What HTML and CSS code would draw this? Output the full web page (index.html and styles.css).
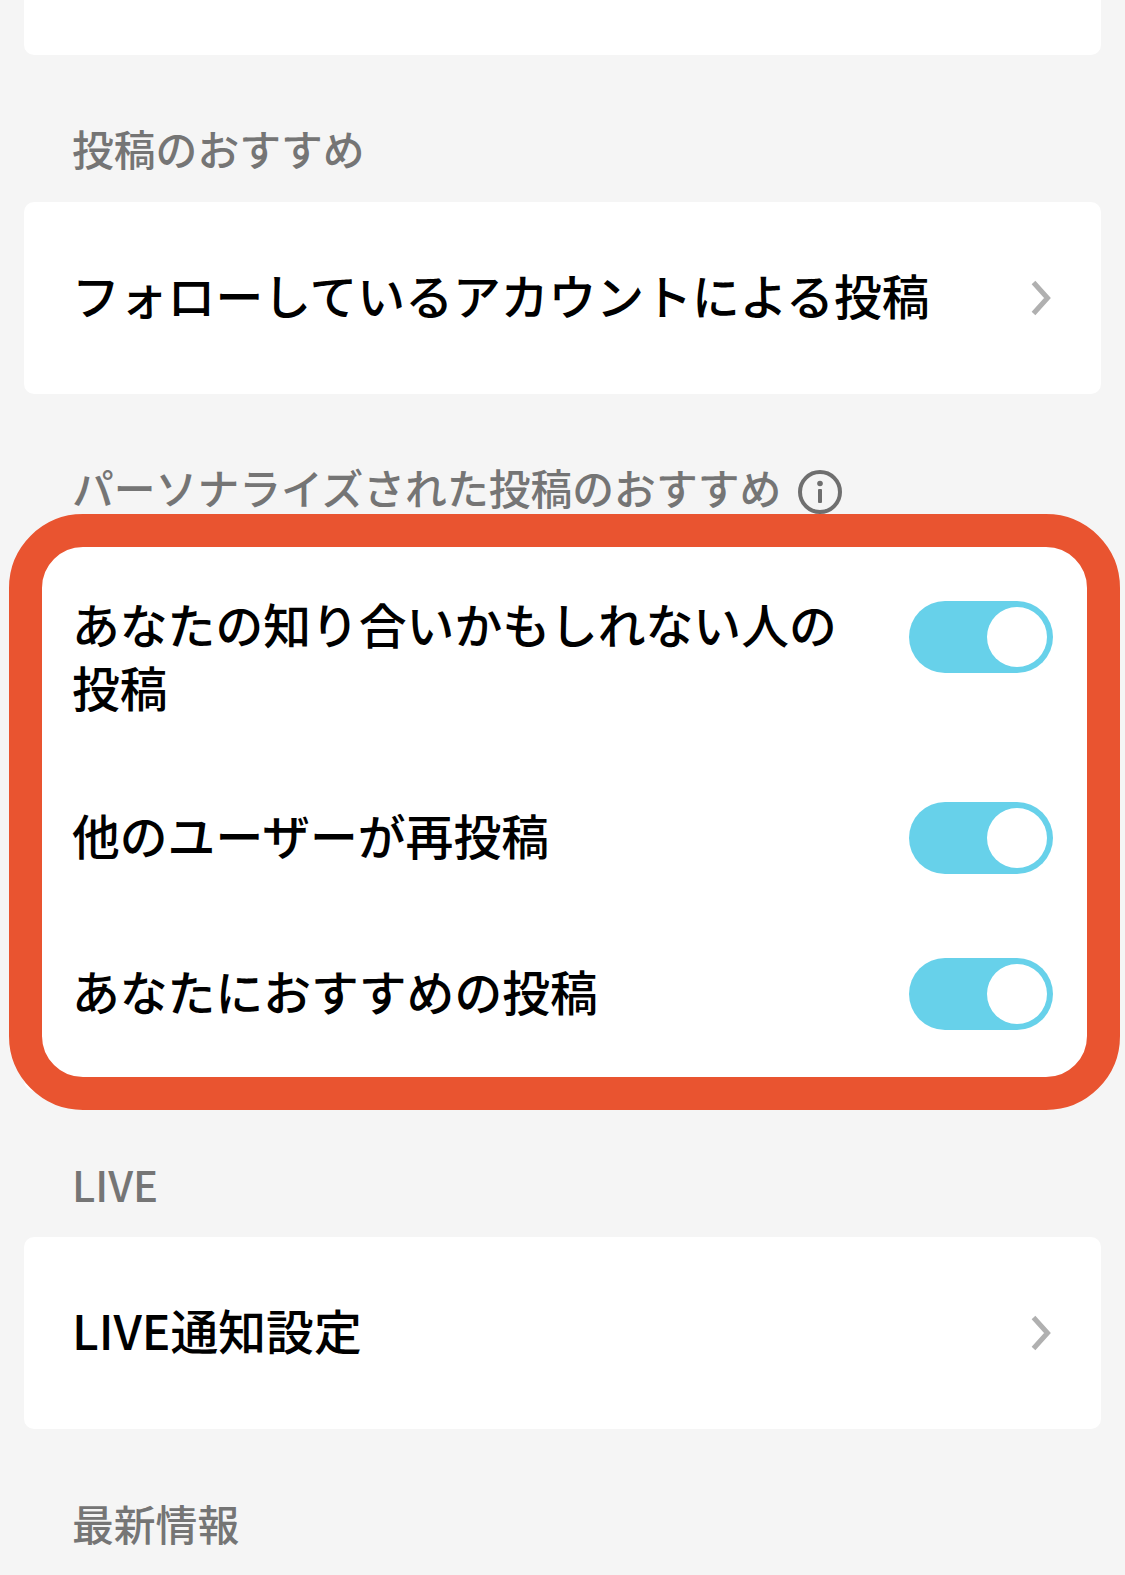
FILE: index.html
```html
<!DOCTYPE html>
<html lang="ja">
<head>
    <meta charset="UTF-8">
    <meta name="viewport" content="width=device-width, initial-scale=1.0">
    <title>投稿のおすすめ</title>
    <link rel="stylesheet" href="styles.css">
</head>
<body>
    <div class="page">
        <div class="card card-top"></div>

        <h2 class="section-label">投稿のおすすめ</h2>
        <div class="card link-row">
            <span class="row-text">フォローしているアカウントによる投稿</span>
            <svg class="chevron" viewBox="0 0 20 36" aria-hidden="true"><path d="M2.5 2.5 L16.5 18 L2.5 33.5"/></svg>
        </div>

        <h2 class="section-label">
            パーソナライズされた投稿のおすすめ
            <svg class="info-icon" viewBox="0 0 44 44" aria-hidden="true">
                <circle class="info-ring" cx="22" cy="22" r="20"/>
                <circle class="info-dot" cx="22" cy="13.5" r="2.8"/>
                <rect class="info-dot" x="20" y="19" width="4" height="14" rx="1"/>
            </svg>
        </h2>
        <div class="card toggle-list">
            <div class="toggle-row toggle-row-wrap">
                <span class="row-text">あなたの知り合いかもしれない人の投稿</span>
                <span class="toggle"><span class="knob"></span></span>
            </div>
            <div class="toggle-row">
                <span class="row-text">他のユーザーが再投稿</span>
                <span class="toggle"><span class="knob"></span></span>
            </div>
            <div class="toggle-row">
                <span class="row-text">あなたにおすすめの投稿</span>
                <span class="toggle"><span class="knob"></span></span>
            </div>
        </div>

        <h2 class="section-label section-label-live">LIVE</h2>
        <div class="card link-row">
            <span class="row-text">LIVE通知設定</span>
            <svg class="chevron" viewBox="0 0 20 36" aria-hidden="true"><path d="M2.5 2.5 L16.5 18 L2.5 33.5"/></svg>
        </div>

        <h2 class="section-label section-label-last">最新情報</h2>

        <div class="highlight-frame"></div>
    </div>
</body>
</html>
```

FILE: styles.css
```css
html, body {
    margin: 0;
    background-color: #f5f5f5;
}

body {
    font-family: "Noto Sans CJK JP", "Noto Sans", sans-serif;
}

.page {
    position: relative;
    height: 1575px;
    padding: 0 24px;
    box-sizing: border-box;
    overflow: hidden;
}

.card {
    background-color: white;
    border-radius: 10px;
}

.card-top {
    height: 55px;
    border-radius: 0 0 10px 10px;
}

.section-label {
    display: flex;
    align-items: center;
    gap: 17px;
    margin: 63px 0 24px;
    padding-left: 48px;
    font-size: 41.8px;
    font-weight: 500;
    line-height: 60px;
    color: #757575;
}

.section-label-live {
    margin-bottom: 23px;
}

.section-label-last {
    margin-top: 64px;
}

.row-text {
    flex: 1;
    padding-bottom: 8px;
    font-size: 47.8px;
    font-weight: 500;
    line-height: 63px;
    color: black;
}

.link-row {
    display: flex;
    align-items: center;
    height: 192px;
    padding: 0 50px 0 48px;
}

.chevron {
    width: 20px;
    height: 36px;
    fill: none;
    stroke: #b0b0b0;
    stroke-width: 5;
}

.toggle-list {
    height: 550px;
    padding-top: 9px;
    box-sizing: border-box;
}

.toggle-row {
    display: flex;
    align-items: center;
    gap: 48px;
    padding: 42px 48px;
}

.toggle-row-wrap {
    align-items: flex-start;
    padding-bottom: 34px;
}

.toggle-row-wrap .toggle {
    margin-top: 9px;
}

.toggle {
    display: flex;
    justify-content: flex-end;
    align-items: center;
    flex: none;
    width: 144px;
    height: 72px;
    padding: 6px;
    box-sizing: border-box;
    border-radius: 36px;
    background-color: #67d1ea;
}

.knob {
    width: 60px;
    height: 60px;
    border-radius: 50%;
    background-color: white;
}

.info-icon {
    flex: none;
    width: 44px;
    height: 44px;
    margin-top: 10px;
}

.info-ring {
    fill: none;
    stroke: #6f6f6f;
    stroke-width: 4;
}

.info-dot {
    fill: #6f6f6f;
}

.highlight-frame {
    position: absolute;
    left: 9px;
    top: 514px;
    width: 1111px;
    height: 596px;
    box-sizing: border-box;
    border: 33px solid #e95430;
    border-radius: 74px;
}
```
